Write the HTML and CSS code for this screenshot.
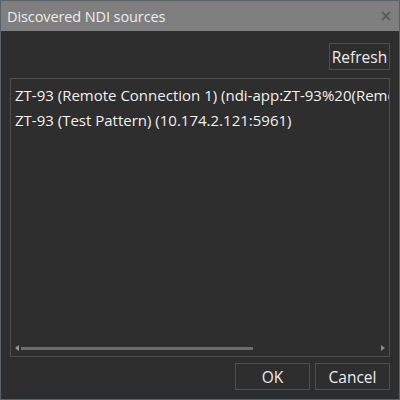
FILE: index.html
```html
<!DOCTYPE html>
<html>
<head>
<meta charset="utf-8">
<link rel="stylesheet" href="styles.css">
</head>
<body>
<div class="window">
  <div class="titlebar">
    <span class="title">Discovered NDI sources</span>
    <svg class="close" width="10" height="10" viewBox="0 0 10 10"><path d="M1 1L9 9M9 1L1 9" stroke="#5a5a5a" stroke-width="1.8"/></svg>
  </div>
  <div class="content">
    <div class="toolbar"><button class="btn refresh">Refresh</button></div>
    <div class="list">
      <div class="items">
        <div class="item">ZT-93 (Remote Connection 1) (ndi-app:ZT-93%20(Remote%20Connection%201))</div>
        <div class="item">ZT-93 (Test Pattern) (10.174.2.121:5961)</div>
      </div>
      <div class="hscroll">
        <span class="arrow left"></span>
        <div class="track"><div class="thumb"></div></div>
        <span class="arrow right"></span>
      </div>
    </div>
    <div class="actions">
      <button class="btn ok">OK</button>
      <button class="btn cancel">Cancel</button>
    </div>
  </div>
</div>
</body>
</html>
```
FILE: styles.css
```css
html, body { margin: 0; padding: 0; background: #2e2e2e; }
body { width: 400px; height: 400px; overflow: hidden; font-family: "Open Sans", "Noto Sans", sans-serif; }
.window {
  box-sizing: border-box; width: 400px; height: 400px;
  border: 1px solid #5b6168; background: #2e2e2e;
  display: flex; flex-direction: column;
}
.titlebar {
  height: 30px; background: #7f7f7f; display: flex; align-items: center;
  justify-content: space-between; padding: 0 8px 0 6px; box-sizing: border-box;
  flex: none;
}
.title { color: #ececec; font-size: 14.5px; letter-spacing: -0.1px; margin-top: 1px; }
.close { display: block; margin-top: -1px; }
.content {
  flex: 1; display: flex; flex-direction: column;
  padding: 12px 9px 8px 9px; box-sizing: border-box;
}
.toolbar { display: flex; justify-content: flex-end; }
.btn {
  box-sizing: border-box; height: 27px; background: #2e2e2e;
  border: 1px solid #4f4f4f; color: #ececec; font-family: inherit;
  font-size: 15.5px; padding: 0; margin: 0;
}
.refresh { width: 61px; }
.list {
  margin-top: 8px; height: 279px; box-sizing: border-box;
  border: 1px solid #4f4f4f; display: flex; flex-direction: column;
  overflow: hidden;
}
.items { flex: 1; padding: 4px 0 0 4px; overflow: hidden; }
.item {
  height: 25px; line-height: 25px; white-space: nowrap; overflow: hidden; color: #f0f0f0;
  font-size: 15px;
}
.hscroll {
  height: 12px; display: flex; align-items: center; padding: 0 4px 2px 4px;
  flex: none;
}
.arrow { width: 0; height: 0; border-top: 3px solid transparent; border-bottom: 3px solid transparent; }
.arrow.left { border-right: 4px solid #9a9a9a; }
.arrow.right { border-left: 4px solid #8a8a8a; }
.track { flex: 1; height: 3px; margin: 0 2px; }
.thumb { width: 232px; height: 3px; background: #6b6b6b; }
.actions { display: flex; justify-content: flex-end; gap: 5px; margin-top: 6px; }
.ok, .cancel { width: 75px; }
.ok { padding-top: 1px; }
```
